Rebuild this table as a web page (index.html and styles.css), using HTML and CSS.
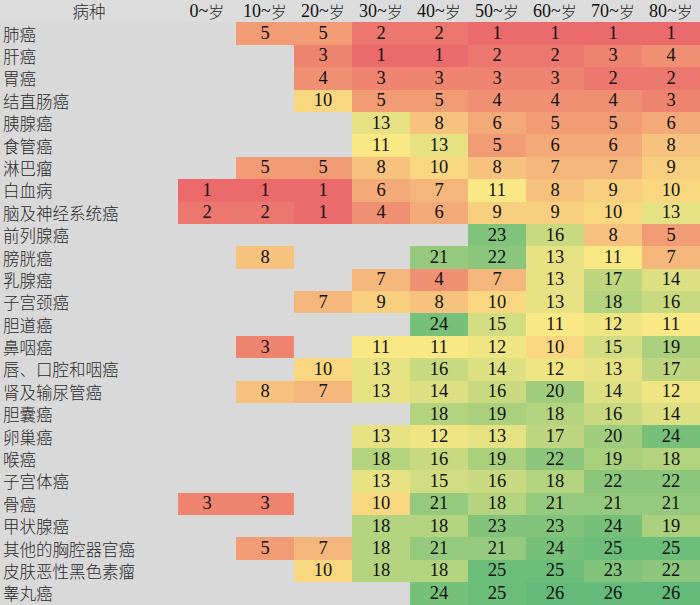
FILE: index.html
```html
<!DOCTYPE html>
<html lang="zh-CN">
<head>
<meta charset="utf-8">
<title>癌症发病顺位</title>
<link rel="stylesheet" href="styles.css">
</head>
<body>
<div class="heat">
  <div class="h lab">病种</div><div class="h">0~<span class="cj">岁</span></div><div class="h">10~<span class="cj">岁</span></div><div class="h">20~<span class="cj">岁</span></div><div class="h">30~<span class="cj">岁</span></div><div class="h">40~<span class="cj">岁</span></div><div class="h">50~<span class="cj">岁</span></div><div class="h">60~<span class="cj">岁</span></div><div class="h">70~<span class="cj">岁</span></div><div class="h">80~<span class="cj">岁</span></div>

  <div class="n">肺癌</div><div class="c"></div><div class="c v5">5</div><div class="c v5">5</div><div class="c v2">2</div><div class="c v2">2</div><div class="c v1">1</div><div class="c v1">1</div><div class="c v1">1</div><div class="c v1">1</div>
  <div class="n">肝癌</div><div class="c"></div><div class="c"></div><div class="c v3">3</div><div class="c v1">1</div><div class="c v1">1</div><div class="c v2">2</div><div class="c v2">2</div><div class="c v3">3</div><div class="c v4">4</div>
  <div class="n">胃癌</div><div class="c"></div><div class="c"></div><div class="c v4">4</div><div class="c v3">3</div><div class="c v3">3</div><div class="c v3">3</div><div class="c v3">3</div><div class="c v2">2</div><div class="c v2">2</div>
  <div class="n">结直肠癌</div><div class="c"></div><div class="c"></div><div class="c v10">10</div><div class="c v5">5</div><div class="c v5">5</div><div class="c v4">4</div><div class="c v4">4</div><div class="c v4">4</div><div class="c v3">3</div>
  <div class="n">胰腺癌</div><div class="c"></div><div class="c"></div><div class="c"></div><div class="c v13">13</div><div class="c v8">8</div><div class="c v6">6</div><div class="c v5">5</div><div class="c v5">5</div><div class="c v6">6</div>
  <div class="n">食管癌</div><div class="c"></div><div class="c"></div><div class="c"></div><div class="c v11">11</div><div class="c v13">13</div><div class="c v5">5</div><div class="c v6">6</div><div class="c v6">6</div><div class="c v8">8</div>
  <div class="n">淋巴瘤</div><div class="c"></div><div class="c v5">5</div><div class="c v5">5</div><div class="c v8">8</div><div class="c v10">10</div><div class="c v8">8</div><div class="c v7">7</div><div class="c v7">7</div><div class="c v9">9</div>
  <div class="n">白血病</div><div class="c v1">1</div><div class="c v1">1</div><div class="c v1">1</div><div class="c v6">6</div><div class="c v7">7</div><div class="c v11">11</div><div class="c v8">8</div><div class="c v9">9</div><div class="c v10">10</div>
  <div class="n">脑及神经系统癌</div><div class="c v2">2</div><div class="c v2">2</div><div class="c v1">1</div><div class="c v4">4</div><div class="c v6">6</div><div class="c v9">9</div><div class="c v9">9</div><div class="c v10">10</div><div class="c v13">13</div>
  <div class="n">前列腺癌</div><div class="c"></div><div class="c"></div><div class="c"></div><div class="c"></div><div class="c"></div><div class="c v23">23</div><div class="c v16">16</div><div class="c v8">8</div><div class="c v5">5</div>
  <div class="n">膀胱癌</div><div class="c"></div><div class="c v8">8</div><div class="c"></div><div class="c"></div><div class="c v21">21</div><div class="c v22">22</div><div class="c v13">13</div><div class="c v11">11</div><div class="c v7">7</div>
  <div class="n">乳腺癌</div><div class="c"></div><div class="c"></div><div class="c"></div><div class="c v7">7</div><div class="c v4">4</div><div class="c v7">7</div><div class="c v13">13</div><div class="c v17">17</div><div class="c v14">14</div>
  <div class="n">子宫颈癌</div><div class="c"></div><div class="c"></div><div class="c v7">7</div><div class="c v9">9</div><div class="c v8">8</div><div class="c v10">10</div><div class="c v13">13</div><div class="c v18">18</div><div class="c v16">16</div>
  <div class="n">胆道癌</div><div class="c"></div><div class="c"></div><div class="c"></div><div class="c"></div><div class="c v24">24</div><div class="c v15">15</div><div class="c v11">11</div><div class="c v12">12</div><div class="c v11">11</div>
  <div class="n">鼻咽癌</div><div class="c"></div><div class="c v3">3</div><div class="c"></div><div class="c v11">11</div><div class="c v11">11</div><div class="c v12">12</div><div class="c v10">10</div><div class="c v15">15</div><div class="c v19">19</div>
  <div class="n">唇、口腔和咽癌</div><div class="c"></div><div class="c"></div><div class="c v10">10</div><div class="c v13">13</div><div class="c v16">16</div><div class="c v14">14</div><div class="c v12">12</div><div class="c v13">13</div><div class="c v17">17</div>
  <div class="n">肾及输尿管癌</div><div class="c"></div><div class="c v8">8</div><div class="c v7">7</div><div class="c v13">13</div><div class="c v14">14</div><div class="c v16">16</div><div class="c v20">20</div><div class="c v14">14</div><div class="c v12">12</div>
  <div class="n">胆囊癌</div><div class="c"></div><div class="c"></div><div class="c"></div><div class="c"></div><div class="c v18">18</div><div class="c v19">19</div><div class="c v18">18</div><div class="c v16">16</div><div class="c v14">14</div>
  <div class="n">卵巢癌</div><div class="c"></div><div class="c"></div><div class="c"></div><div class="c v13">13</div><div class="c v12">12</div><div class="c v13">13</div><div class="c v17">17</div><div class="c v20">20</div><div class="c v24">24</div>
  <div class="n">喉癌</div><div class="c"></div><div class="c"></div><div class="c"></div><div class="c v18">18</div><div class="c v16">16</div><div class="c v19">19</div><div class="c v22">22</div><div class="c v19">19</div><div class="c v18">18</div>
  <div class="n">子宫体癌</div><div class="c"></div><div class="c"></div><div class="c"></div><div class="c v13">13</div><div class="c v15">15</div><div class="c v16">16</div><div class="c v18">18</div><div class="c v22">22</div><div class="c v22">22</div>
  <div class="n">骨癌</div><div class="c v3">3</div><div class="c v3">3</div><div class="c"></div><div class="c v10">10</div><div class="c v21">21</div><div class="c v18">18</div><div class="c v21">21</div><div class="c v21">21</div><div class="c v21">21</div>
  <div class="n">甲状腺癌</div><div class="c"></div><div class="c"></div><div class="c"></div><div class="c v18">18</div><div class="c v18">18</div><div class="c v23">23</div><div class="c v23">23</div><div class="c v24">24</div><div class="c v19">19</div>
  <div class="n">其他的胸腔器官癌</div><div class="c"></div><div class="c v5">5</div><div class="c v7">7</div><div class="c v18">18</div><div class="c v21">21</div><div class="c v21">21</div><div class="c v24">24</div><div class="c v25">25</div><div class="c v25">25</div>
  <div class="n">皮肤恶性黑色素瘤</div><div class="c"></div><div class="c"></div><div class="c v10">10</div><div class="c v18">18</div><div class="c v18">18</div><div class="c v25">25</div><div class="c v25">25</div><div class="c v23">23</div><div class="c v22">22</div>
  <div class="n">睾丸癌</div><div class="c"></div><div class="c"></div><div class="c"></div><div class="c"></div><div class="c v24">24</div><div class="c v25">25</div><div class="c v26">26</div><div class="c v26">26</div><div class="c v26">26</div>
</div>
</body>
</html>
```

FILE: styles.css
```css
html, body {
  margin: 0;
  padding: 0;
  background: #d9d9d9;
}

.heat {
  width: 700px;
  height: 605px;
  display: grid;
  grid-template-columns: 178px repeat(9, 58px);
  grid-auto-rows: 22.4px;
  color: #111111;
  background: #d9d9d9;
}

.h {
  display: flex;
  align-items: center;
  justify-content: center;
  font-family: "Liberation Serif", "Times New Roman", serif;
  font-size: 18px;
  background: #dcdcdc;
  white-space: nowrap;
}

.cj,
.h.lab,
.n {
  font-family: "Noto Sans CJK SC", sans-serif;
  font-weight: 300;
  color: #2a2a2a;
}

.cj {
  font-size: 16px;
}

.h.lab {
  font-size: 16.5px;
}

.n {
  display: flex;
  align-items: center;
  padding-left: 3px;
  font-size: 16.5px;
  white-space: nowrap;
}

.c {
  display: flex;
  align-items: center;
  justify-content: center;
  font-family: "Liberation Serif", "Times New Roman", serif;
  font-size: 18.5px;
}

.v1 { background: #eb6a6b; }
.v2 { background: #ec776e; }
.v3 { background: #ee8370; }
.v4 { background: #f09073; }
.v5 { background: #f19c75; }
.v6 { background: #f3a978; }
.v7 { background: #f4b67a; }
.v8 { background: #f6c27d; }
.v9 { background: #f7cf7f; }
.v10 { background: #f8d780; }
.v11 { background: #fae884; }
.v12 { background: #f0e583; }
.v13 { background: #e6e283; }
.v14 { background: #dcdf82; }
.v15 { background: #d2dc81; }
.v16 { background: #c8d980; }
.v17 { background: #bed680; }
.v18 { background: #b4d37f; }
.v19 { background: #aad07e; }
.v20 { background: #9fcc7d; }
.v21 { background: #95c97d; }
.v22 { background: #8bc67c; }
.v23 { background: #81c37b; }
.v24 { background: #77c07a; }
.v25 { background: #6dbd7a; }
.v26 { background: #63ba79; }
```
